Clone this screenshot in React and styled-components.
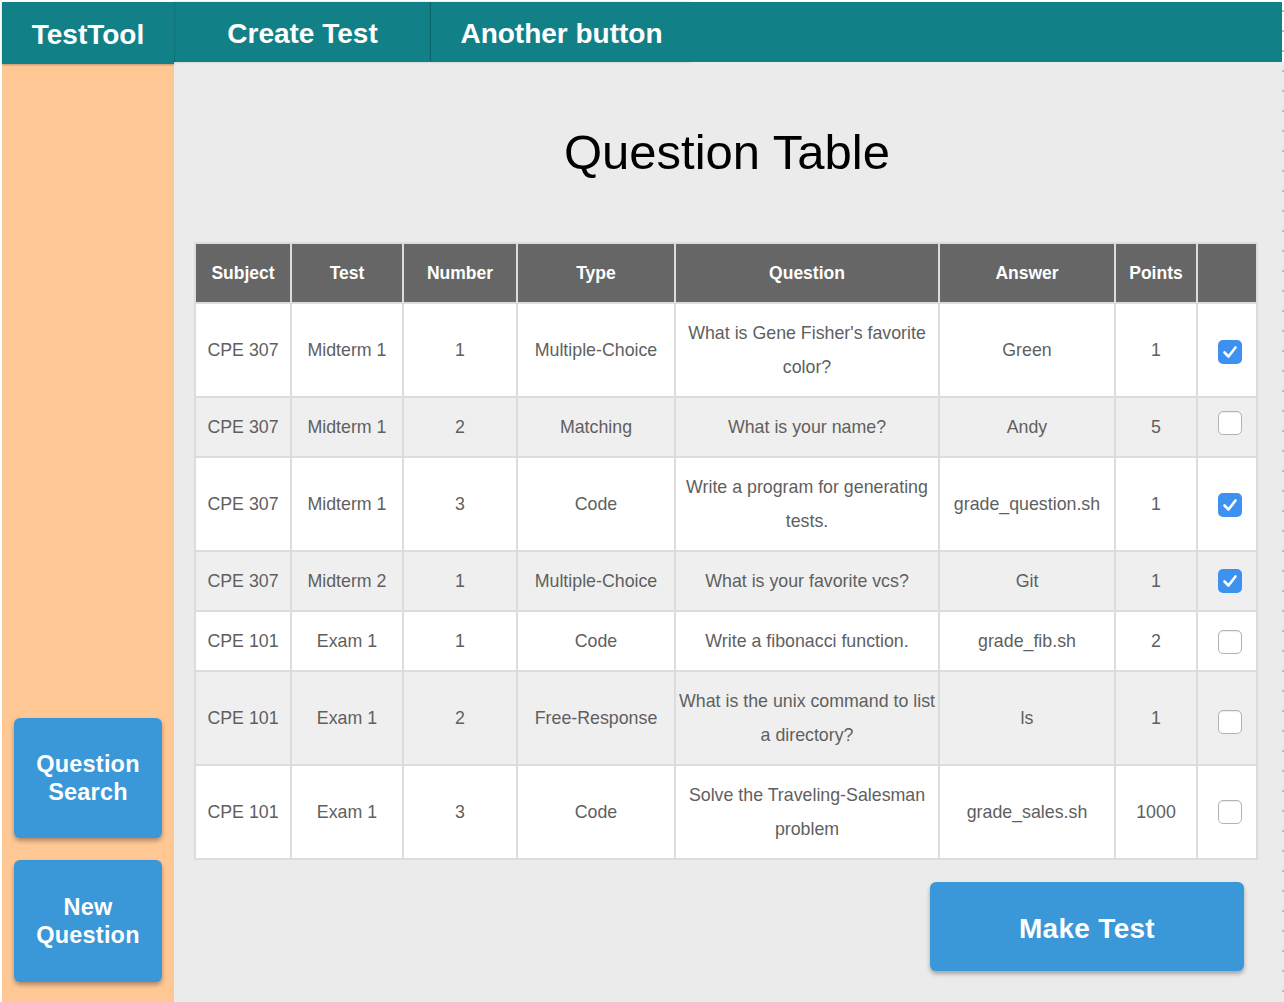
import React from "react";
import styled, { createGlobalStyle } from "styled-components";

const GlobalStyle = createGlobalStyle`
  html, body {
    margin: 0;
    padding: 0;
    background: #ffffff;
  }
  body {
    font-family: "Liberation Sans", Arial, Helvetica, sans-serif;
  }
  * { box-sizing: border-box; }
`;

const Page = styled.div`
  width: 1284px;
  height: 1002px;
  padding: 2px 2px 0 2px;
  overflow: hidden;
  display: flex;
  flex-direction: column;
  background: #ffffff;
  position: relative;
  &::after {
    content: "";
    position: absolute;
    right: 0;
    top: 10px;
    bottom: 0;
    width: 2px;
    background: repeating-linear-gradient(
      to bottom,
      #bdbdbd 0 2px,
      transparent 2px 20px
    );
  }
`;

const Header = styled.header`
  height: 60px;
  background: #128187;
  display: flex;
  align-items: flex-start;
  position: relative;
  z-index: 2;
`;

const Tab = styled.button`
  height: ${(p) => (p.$active ? "62px" : "60px")};
  width: ${(p) => p.$w}px;
  border: none;
  margin: 0;
  padding: ${(p) => (p.$active ? "3px 0 0 0" : "4px 0 0 0")};
  background: #128187;
  color: #ffffff;
  font-family: "Liberation Sans", Arial, sans-serif;
  font-weight: 700;
  font-size: 28px;
  border-radius: ${(p) => (p.$active ? "0" : "0 0 3px 3px")};
  box-shadow: ${(p) =>
    p.$active
      ? "0 1px 2px rgba(0,0,0,0.25)"
      : "-1px 0 2px rgba(0,0,0,0.28)"};
  position: relative;
  z-index: ${(p) => (p.$active ? 3 : 1)};
  cursor: pointer;
`;

const Body = styled.div`
  flex: 1;
  display: flex;
  min-height: 0;
`;

const Sidebar = styled.aside`
  width: 172px;
  background: #fec794;
  display: flex;
  flex-direction: column;
  justify-content: flex-end;
  gap: 22px;
  padding: 0 12px 20px 12px;
`;

const SideButton = styled.button`
  width: 148px;
  height: ${(p) => p.$h}px;
  border: none;
  border-radius: 6px;
  background: #3a98d8;
  color: #ffffff;
  font-family: "Liberation Sans", Arial, sans-serif;
  font-weight: 700;
  font-size: 23.5px;
  line-height: 28px;
  letter-spacing: 0.2px;
  box-shadow: 0 3px 4px rgba(0, 0, 0, 0.3);
  cursor: pointer;
`;

const Main = styled.main`
  flex: 1;
  background: #ebebeb;
  display: flex;
  flex-direction: column;
  padding: 62px 26px 0 20px;
`;

const Title = styled.h1`
  margin: 0;
  font-family: "Liberation Sans", Arial, sans-serif;
  font-weight: 400;
  font-size: 49px;
  line-height: 56px;
  color: #000000;
  text-align: center;
  padding-left: 2px;
`;

const Table = styled.table`
  margin-top: 62px;
  width: 1062px;
  table-layout: fixed;
  border-collapse: collapse;
  font-family: "Liberation Sans", Arial, sans-serif;
`;

const Th = styled.th`
  background: #666666;
  color: #ffffff;
  font-size: 17.5px;
  font-weight: 700;
  height: 60px;
  padding: 0;
  border: 2px solid #dcdcdc;
  text-align: center;
`;

const Tr = styled.tr`
  background: ${(p) => (p.$alt ? "#efefef" : "#ffffff")};
`;

const Td = styled.td`
  border: 2px solid #dcdcdc;
  padding: 12px 0;
  font-size: 17.8px;
  line-height: 34px;
  color: #5f5f5f;
  text-align: center;
  vertical-align: middle;
`;

const Check = styled.span`
  display: inline-flex;
  align-items: center;
  justify-content: center;
  width: 24px;
  height: 24px;
  border-radius: 5px;
  vertical-align: middle;
  margin-left: 5px;
  position: relative;
  top: ${(p) => p.$dy || 0}px;
  background: ${(p) => (p.$on ? "#3d92f1" : "#ffffff")};
  border: ${(p) => (p.$on ? "none" : "1.5px solid #b3b3b3")};
  box-shadow: ${(p) =>
    p.$on ? "none" : "inset 0 1px 1px rgba(0,0,0,0.08)"};
`;

const Footer = styled.div`
  display: flex;
  justify-content: flex-end;
  padding: 22px 14px 0 0;
`;

const MakeButton = styled.button`
  width: 314px;
  height: 89px;
  border: none;
  border-radius: 6px;
  background: #3a98d8;
  color: #ffffff;
  font-family: "Liberation Sans", Arial, sans-serif;
  font-weight: 700;
  font-size: 28px;
  letter-spacing: 0.3px;
  padding: 5px 0 0 0;
  box-shadow: 0 3px 4px rgba(0, 0, 0, 0.3);
  cursor: pointer;
`;

const columns = [
  { label: "Subject", w: 96 },
  { label: "Test", w: 112 },
  { label: "Number", w: 114 },
  { label: "Type", w: 158 },
  { label: "Question", w: 264 },
  { label: "Answer", w: 176 },
  { label: "Points", w: 82 },
  { label: "", w: 60 },
];

const rows = [
  ["CPE 307", "Midterm 1", "1", "Multiple-Choice", "What is Gene Fisher's favorite color?", "Green", "1", true, 1],
  ["CPE 307", "Midterm 1", "2", "Matching", "What is your name?", "Andy", "5", false, -5],
  ["CPE 307", "Midterm 1", "3", "Code", "Write a program for generating tests.", "grade_question.sh", "1", true, 0],
  ["CPE 307", "Midterm 2", "1", "Multiple-Choice", "What is your favorite vcs?", "Git", "1", true, -1],
  ["CPE 101", "Exam 1", "1", "Code", "Write a fibonacci function.", "grade_fib.sh", "2", false, 0],
  ["CPE 101", "Exam 1", "2", "Free-Response", "What is the unix command to list a directory?", "ls", "1", false, 3],
  ["CPE 101", "Exam 1", "3", "Code", "Solve the Traveling-Salesman problem", "grade_sales.sh", "1000", false, -1],
];

const CheckMark = () => (
  <svg width="18" height="18" viewBox="0 0 18 18">
    <polyline
      points="3.5,9.5 7.5,13.5 14.5,4.5"
      fill="none"
      stroke="#ffffff"
      strokeWidth="2.6"
      strokeLinecap="round"
      strokeLinejoin="round"
    />
  </svg>
);

export default function App() {
  return (
    <>
      <GlobalStyle />
      <Page>
        <Header>
          <Tab $active $w={172}>TestTool</Tab>
          <Tab $w={257}>Create Test</Tab>
          <Tab $w={261}>Another button</Tab>
        </Header>
        <Body>
          <Sidebar>
            <SideButton $h={120}>
              Question
              <br />
              Search
            </SideButton>
            <SideButton $h={122}>
              New
              <br />
              Question
            </SideButton>
          </Sidebar>
          <Main>
            <Title>Question Table</Title>
            <Table>
              <colgroup>
                {columns.map((c, i) => (
                  <col key={i} style={{ width: c.w }} />
                ))}
              </colgroup>
              <thead>
                <tr>
                  {columns.map((c, i) => (
                    <Th key={i}>{c.label}</Th>
                  ))}
                </tr>
              </thead>
              <tbody>
                {rows.map((r, i) => (
                  <Tr key={i} $alt={i % 2 === 1}>
                    {r.slice(0, 7).map((v, j) => (
                      <Td key={j}>{v}</Td>
                    ))}
                    <Td>
                      <Check $on={r[7]} $dy={r[8]}>
                        {r[7] && <CheckMark />}
                      </Check>
                    </Td>
                  </Tr>
                ))}
              </tbody>
            </Table>
            <Footer>
              <MakeButton>Make Test</MakeButton>
            </Footer>
          </Main>
        </Body>
      </Page>
    </>
  );
}
